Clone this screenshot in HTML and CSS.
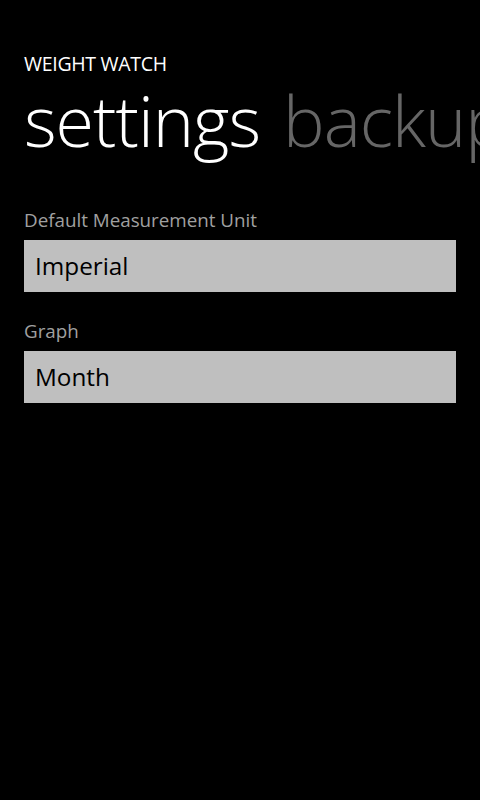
FILE: index.html
```html
<!DOCTYPE html>
<html>
<head>
<meta charset="utf-8">
<link rel="stylesheet" href="styles.css">
</head>
<body>
<div class="page">
  <div class="app-title">WEIGHT WATCH</div>
  <div class="pivot">
    <span class="pivot-item active">settings</span>
    <span class="pivot-item">backup</span>
  </div>
  <div class="content">
    <div class="field">
      <div class="label">Default Measurement Unit</div>
      <div class="picker">Imperial</div>
    </div>
    <div class="field">
      <div class="label">Graph</div>
      <div class="picker">Month</div>
    </div>
  </div>
</div>
</body>
</html>
```
FILE: styles.css
```css
html, body {
  margin: 0;
  padding: 0;
  background: #000;
  width: 480px;
  height: 800px;
  overflow: hidden;
}
.page {
  font-family: "Open Sans", "Noto Sans", sans-serif;
  color: #fff;
  padding: 52px 0 0 24px;
}
.app-title {
  font-size: 19.5px;
  line-height: 24px;
  letter-spacing: -0.3px;
}
.pivot {
  white-space: nowrap;
  font-size: 70px;
  font-weight: 300;
  line-height: 96px;
  letter-spacing: -1px;
  margin-top: -4px;
  display: flex;
  gap: 23px;
  overflow-x: clip;
}
.pivot-item {
  color: #666;
}
.pivot-item.active {
  color: #fff;
}
.content {
  padding-top: 40px;
  padding-right: 24px;
  display: flex;
  flex-direction: column;
  gap: 27px;
}
.label {
  color: #a0a0a0;
  font-size: 18.8px;
  line-height: 24px;
  margin-bottom: 8px;
}
.picker {
  background: #bfbfbf;
  color: #000;
  height: 52px;
  line-height: 52px;
  font-size: 24.3px;
  padding-left: 11px;
}
```
